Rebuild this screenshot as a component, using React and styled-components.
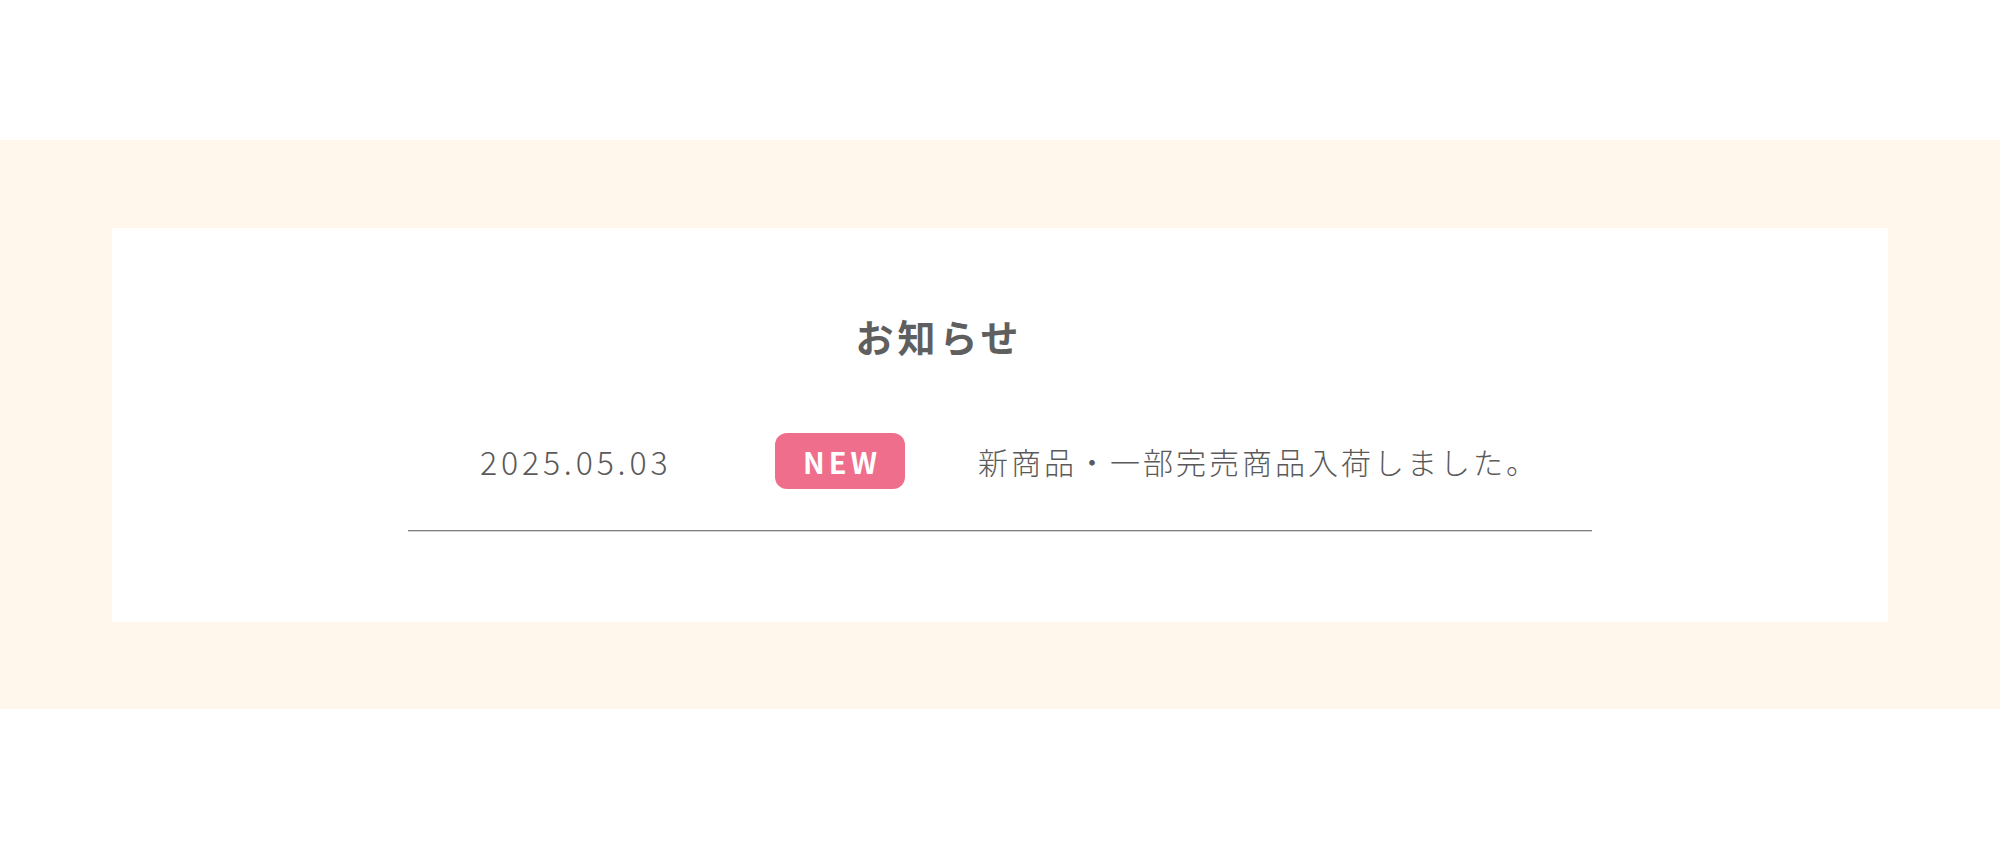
import React from 'react';
import styled, { createGlobalStyle } from 'styled-components';

const GlobalStyle = createGlobalStyle`
  * { box-sizing: border-box; }
  body {
    margin: 0;
    background: #fff;
    font-family: "Noto Sans CJK JP", "Noto Sans", sans-serif;
    color: #5c5c5c;
  }
`;

const news = [
  { date: '2025.05.03', isNew: true, title: '新商品・一部完売商品入荷しました。' },
];

export default function App() {
  return (
    <>
      <GlobalStyle />
      <Page>
        <Band>
          <Card>
            <Heading>お知らせ</Heading>
            <List>
              {news.map((item) => (
                <Row key={item.date + item.title}>
                  <Date>{item.date}</Date>
                  <Badge $visible={item.isNew}>NEW</Badge>
                  <Title>{item.title}</Title>
                </Row>
              ))}
            </List>
          </Card>
        </Band>
      </Page>
    </>
  );
}

const Page = styled.div`
  padding-top: 140px;
  min-height: 850px;
`;

const Band = styled.section`
  background: #fff7eb;
  padding: 88px 112px 87px;
`;

const Card = styled.div`
  background: #fff;
  height: 394px;
  padding: 89px 296px 0;
`;

const Heading = styled.h2`
  margin: 0;
  padding-right: 122px;
  text-align: center;
  font-size: 38px;
  font-weight: 700;
  line-height: 1;
  letter-spacing: 4px;
  color: #5f5f5f;
`;

const List = styled.ul`
  list-style: none;
  margin: 39px 0 0;
  padding: 0;
`;

const Row = styled.li`
  display: grid;
  grid-template-columns: 295px 203px 1fr;
  align-items: center;
  padding: 39px 0 41px 72px;
  border-bottom: 1px solid #7f7f7f;
  box-shadow: 0 1px 0 #d4d4d4;
`;

const Date = styled.span`
  font-size: 32px;
  font-weight: 300;
  letter-spacing: 0.12em;
  line-height: 1;
  white-space: nowrap;
  color: #5a5a5a;
`;

const Badge = styled.span`
  display: flex;
  align-items: center;
  justify-content: center;
  width: 130px;
  height: 56px;
  border-radius: 12px;
  background: #ef6e8b;
  color: #fff;
  font-size: 29px;
  font-weight: 700;
  letter-spacing: 0.14em;
  padding-left: 0.14em;
  visibility: ${(p) => (p.$visible ? 'visible' : 'hidden')};
`;

const Title = styled.span`
  font-size: 30px;
  font-weight: 300;
  letter-spacing: 0.1em;
  line-height: 1;
  white-space: nowrap;
  color: #5a5a5a;
`;
